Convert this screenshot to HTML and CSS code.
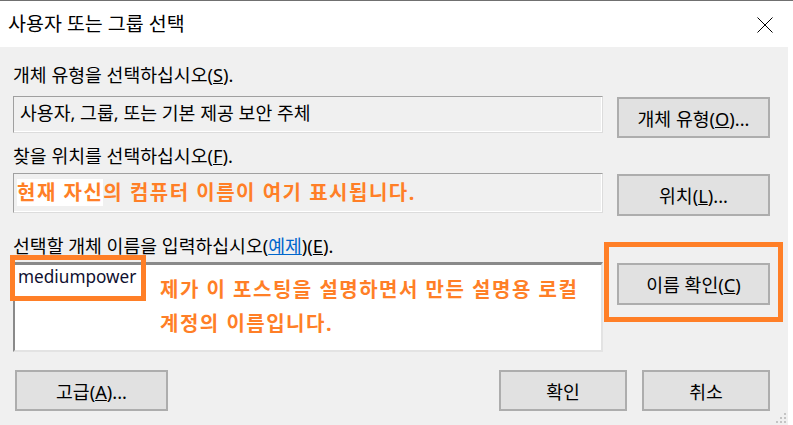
FILE: index.html
```html
<!DOCTYPE html>
<html lang="ko">
<head>
<meta charset="utf-8">
<title>사용자 또는 그룹 선택</title>
<link rel="stylesheet" href="styles.css">
</head>
<body>
<div class="window">
  <div class="titlebar">
    <span class="title">사용자 또는 그룹 선택</span>
    <svg class="close" width="16" height="16" viewBox="0 0 16 16"><path d="M0.5 0.5 L15.5 15.5 M15.5 0.5 L0.5 15.5" stroke="#000" stroke-width="1" fill="none"/></svg>
  </div>
  <div class="content">
    <div class="label label-first">개체 유형을 선택하십시오(<u>S</u>).</div>
    <div class="row row-type">
      <div class="field field-type">사용자, 그룹, 또는 기본 제공 보안 주체</div>
      <button class="btn btn-side">개체 유형(<u>O</u>)...</button>
    </div>
    <div class="label label-loc">찾을 위치를 선택하십시오(<u>F</u>).</div>
    <div class="row row-loc">
      <div class="field field-loc"><span class="hl">현재 자신</span>의 컴퓨터 이름이 여기 표시됩니다.</div>
      <button class="btn btn-side btn-loc">위치(<u>L</u>)...</button>
    </div>
    <div class="label label-name">선택할 개체 이름을 입력하십시오(<span class="link">예제</span>)(<u>E</u>).</div>
    <div class="row row-name">
      <div class="namebox">
        <span class="name">mediumpower</span>
        <span class="mark mark-name"></span>
        <p class="annot">제가 이 포스팅을 설명하면서 만든 설명용 로컬<br>계정의 이름입니다.</p>
      </div>
      <div class="check-wrap">
        <button class="btn btn-side btn-check">이름 확인(<u>C</u>)</button>
        <span class="mark mark-check"></span>
      </div>
    </div>
    <div class="footer">
      <button class="btn btn-adv">고급(<u>A</u>)...</button>
      <div class="spacer"></div>
      <button class="btn btn-small">확인</button>
      <button class="btn btn-small">취소</button>
    </div>
    <svg class="grip" width="12" height="12" viewBox="0 0 12 12">
      <rect x="9" y="0" width="2" height="2" fill="#c4c4c4"/>
      <rect x="9" y="4" width="2" height="2" fill="#c4c4c4"/>
      <rect x="5" y="4" width="2" height="2" fill="#c4c4c4"/>
      <rect x="9" y="8" width="2" height="2" fill="#c4c4c4"/>
      <rect x="5" y="8" width="2" height="2" fill="#c4c4c4"/>
      <rect x="1" y="8" width="2" height="2" fill="#c4c4c4"/>
    </svg>
  </div>
</div>
</body>
</html>
```
FILE: styles.css
```css
html, body {
  margin: 0;
  padding: 0;
}
body {
  background: #ffffff;
  border-top: 1px solid #707070;
  font-family: "Noto Sans", "Noto Sans CJK KR", sans-serif;
  color: #000;
  width: 793px;
  height: 424px;
  overflow: hidden;
}
.window {
  width: 788px;
}
.titlebar {
  height: 46px;
  background: #fff;
  display: flex;
  align-items: center;
  justify-content: space-between;
  padding: 0 15px 0 8px;
}
.title {
  font-size: 19.5px;
  line-height: 24px;
  margin-top: -1px;
}
.close {
  display: block;
  margin-top: 1px;
}
.content {
  position: relative;
  background: #f0f0f0;
  height: 378px;
  padding: 16px 18px 0 13px;
  box-sizing: border-box;
}
.label {
  font-size: 18.3px;
  line-height: 24px;
  height: 24px;
}
.label-loc { margin-top: 6px; }
.label-name { margin-top: 18px; }
.link {
  color: #0066cc;
  text-decoration: underline;
}
.row {
  display: flex;
  align-items: flex-start;
  gap: 14px;
}
.row-type { margin-top: 9px; }
.row-loc { margin-top: 5px; }
.row-name { margin-top: 4px; }
.field {
  width: 590px;
  box-sizing: border-box;
  border: 1px solid #a0a0a0;
  border-right-color: #dcdcdc;
  border-bottom-color: #dcdcdc;
  box-shadow: inset -1px -1px 0 #ffffff;
  background: #f0f0f0;
  white-space: nowrap;
  overflow: hidden;
}
.field-type {
  height: 37px;
  font-size: 18.3px;
  line-height: 32px;
  padding: 0 6px;
}
.field-loc {
  height: 40px;
  font-size: 20px;
  line-height: 37px;
  padding: 0 3px;
  color: #ff7f27;
  font-weight: bold;
  letter-spacing: 1.5px;
}
.hl {
  background: #ffffff;
}
.btn {
  font-family: "Noto Sans", "Noto Sans CJK KR", sans-serif;
  font-size: 18.3px;
  color: #000;
  background: #e1e1e1;
  border: 2px solid #adadad;
  box-sizing: border-box;
  margin: 0;
  padding: 0;
  text-align: center;
}
.btn-side {
  width: 153px;
  height: 41px;
  margin-top: 1px;
}
.btn-loc { height: 42px; }
.btn-check { height: 42px; }
.namebox {
  position: relative;
  width: 590px;
  height: 90px;
  box-sizing: border-box;
  background: #fff;
  border-top: 3px solid #8a8a8a;
  border-left: 2px solid #8a8a8a;
  border-right: 2px solid #e3e3e3;
  border-bottom: 2px solid #e3e3e3;
  padding: 2px 0 0 3px;
}
.name {
  display: block;
  font-size: 17.2px;
  line-height: 20px;
  color: #101030;
}
.mark {
  position: absolute;
  border: 5px solid #ff7f27;
  box-sizing: border-box;
}
.mark-name {
  left: -5px;
  top: -10px;
  width: 136px;
  height: 46px;
}
.annot {
  position: absolute;
  left: 145px;
  top: 8px;
  margin: 0;
  font-size: 20px;
  line-height: 34px;
  font-weight: bold;
  color: #ff7f27;
  letter-spacing: 1.5px;
  white-space: nowrap;
}
.check-wrap {
  position: relative;
}
.mark-check {
  left: -13px;
  top: -20px;
  width: 179px;
  height: 80px;
}
.footer {
  display: flex;
  gap: 15px;
  margin-top: 18px;
  padding-left: 2px;
}
.spacer { flex: 1; }
.btn-adv {
  width: 153px;
  height: 41px;
}
.btn-small {
  width: 128px;
  height: 41px;
}
.grip {
  position: absolute;
  right: 1px;
  bottom: 0;
}
```
